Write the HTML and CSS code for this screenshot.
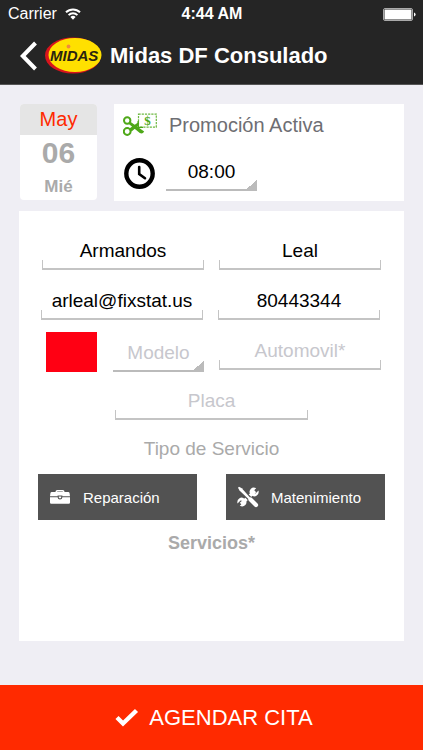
FILE: index.html
```html
<!DOCTYPE html>
<html lang="es">
<head>
  <meta charset="UTF-8">
  <meta name="viewport" content="width=device-width, initial-scale=1.0">
  <title>Agendar Cita</title>
  <link rel="stylesheet" href="styles.css">
</head>
<body>
  <header class="header">
    <div class="status-bar">
      <div class="carrier">
        <span>Carrier</span>
        <svg width="16" height="12" viewBox="0 0 16 12" fill="none" stroke="#fff" stroke-width="2">
          <path d="M1 4.3a10 10 0 0 1 14 0"/>
          <path d="M3.6 7.1a6.3 6.3 0 0 1 8.8 0"/>
          <path d="M5.4 9 8 11.8 10.6 9a3.8 3.8 0 0 0-5.2 0z" fill="#fff" stroke="none"/>
        </svg>
      </div>
      <span class="clock">4:44 AM</span>
      <div class="battery">
        <svg width="33" height="13" viewBox="0 0 33 13">
          <rect x=".5" y=".5" width="29" height="12" rx="1.5" fill="none" stroke="#aaa"/>
          <rect x="1.5" y="1.5" width="27" height="10" rx=".5" fill="#fff"/>
          <path d="M31 4.5q1.6.5 1.6 2t-1.6 2z" fill="#fff"/>
        </svg>
      </div>
    </div>
    <nav class="nav">
      <button class="back-btn" aria-label="Atrás">
        <svg width="18" height="30" viewBox="0 0 18 30" fill="none" stroke="#fff" stroke-width="4">
          <path d="M15.5 2 2.8 15l12.7 13"/>
        </svg>
      </button>
      <svg class="logo" width="58" height="37" viewBox="0 0 58 37">
        <ellipse cx="28" cy="18.5" rx="28" ry="18" fill="#d8141c"/>
        <ellipse cx="30" cy="18" rx="26.5" ry="17" fill="#ffe000"/>
        <text x="5" y="24" class="logo-text">MIDAS</text>
        <circle cx="23.5" cy="9.5" r="1.9" fill="#f08a3c"/>
      </svg>
      <h1>Midas DF Consulado</h1>
    </nav>
  </header>

  <main class="content">
    <section class="top-row">
      <div class="calendar">
        <p class="month">May</p>
        <p class="day">06</p>
        <p class="weekday">Mié</p>
      </div>
      <div class="info">
        <div class="info-row">
          <svg width="35" height="25" viewBox="0 0 35 25">
            <g fill="none" stroke="#4ea818" stroke-width="2">
              <circle cx="4.2" cy="7.5" r="3.2"/>
              <circle cx="4.2" cy="18.5" r="3.4"/>
            </g>
            <path d="M7 8.6 21.2 18.6q-1.6 2.8-4.4 1.4L5.8 11zM6.400 15.600l10-7 2.600 1L8.600 18.600z" fill="#4ea818"/>
            <rect x="15.500" y="1.200" width="17.800" height="13" fill="#fff" stroke="#6cb840" stroke-width="1.200" stroke-dasharray="2.200 1"/>
            <path d="M15.200 8v6.400H20" fill="none" stroke="#4ea818" stroke-width="1.400"/>
            <text x="24.500" y="12" class="coupon-sign">$</text>
          </svg>
          <p class="promo">Promoción Activa</p>
        </div>
        <div class="info-row time-row">
          <svg width="33" height="33" viewBox="0 0 33 33" fill="none" stroke="#000">
            <circle cx="16.5" cy="15.5" r="13.2" stroke-width="4.4"/>
            <path d="M16.2 9v7l5.8 4.2" stroke-width="2.6" stroke-linecap="round"/>
          </svg>
          <select class="picker time" aria-label="Hora">
            <option>08:00</option>
          </select>
        </div>
      </div>
    </section>

    <form class="form" id="cita">
      <div class="row">
        <input class="field" type="text" aria-label="Nombre" value="Armandos">
        <input class="field" type="text" aria-label="Apellido" value="Leal">
      </div>
      <div class="row row-contact">
        <input class="field" type="email" aria-label="Correo" value="arleal@fixstat.us">
        <input class="field" type="tel" aria-label="Teléfono" value="80443344">
      </div>
      <div class="row row-car">
        <div class="car-model">
          <button class="swatch" type="button" aria-label="Color"></button>
          <select class="picker empty" aria-label="Modelo">
            <option>Modelo</option>
          </select>
        </div>
        <input class="field" type="text" aria-label="Automovil" placeholder="Automovil*">
      </div>
      <input class="field plate" type="text" aria-label="Placa" placeholder="Placa">

      <h2 class="service-type">Tipo de Servicio</h2>
      <div class="service-buttons">
        <button class="service-btn" type="button">
          <svg width="22" height="18" viewBox="0 0 22 18" fill="#fff">
            <path d="M6.5 4.5V3.8Q6.5 2 8.3 2h5.4q1.8 0 1.8 1.8v.7h-1.7v-.9H8.2v.9z"/>
            <path d="M2.8 4h16.4q1.2 0 1.4 1.2l.4 3.1h-7.6v-.7H8.6v.7H1l.4-3.1Q1.6 4 2.8 4z"/>
            <path d="M1 9.2h7.6q.2 2.2 2.4 2.2t2.4-2.2H21v5.3q0 1.3-1.3 1.3H2.3Q1 15.8 1 14.5z"/>
            <path d="M9.8 8.6h2.4v.8q0 .9-1.2.9t-1.2-.9z"/>
          </svg>
          <span>Reparación</span>
        </button>
        <button class="service-btn" type="button">
          <svg width="22" height="22" viewBox="0 0 22 22">
            <path d="M4 18 18 5" stroke="#fff" stroke-width="3.4"/>
            <path d="M19.2 2.2 16 5.2l.5 1.9 2 .4 3-3.1q.8 3.4-1.7 5.2-2 1.4-4.2.5l-2.9-3q-.7-2.2 1-4.1 2.2-2.3 5.5-.8z" fill="#fff"/>
            <path d="M2.8 19.8 6 16.8l-.5-1.9-2-.4-3 3.1q-.8-3.4 1.7-5.2 2-1.4 4.2-.5l2.9 3q.7 2.2-1 4.1-2.2 2.300-5.500.8z" fill="#fff"/>
            <path d="M4 4 18 18" stroke="#525252" stroke-width="4.6"/>
            <path d="M1 1.7 2 .8l2.800 1.500 8.400 9.400-1.500 1.500L2.500 4.500z" fill="#fff"/>
            <path d="m13.500 13.500 5.500 5.500" stroke="#fff" stroke-width="4.200" stroke-linecap="round"/>
          </svg>
          <span>Matenimiento</span>
        </button>
      </div>
      <h2 class="services">Servicios*</h2>
    </form>
  </main>

  <button class="submit-btn" type="submit" form="cita">
    <svg width="24" height="20" viewBox="0 0 24 20" fill="none" stroke="#fff" stroke-width="4.4">
      <path d="m2 9.500 6 6L21.500 2.500"/>
    </svg>
    <span>AGENDAR CITA</span>
  </button>
</body>
</html>
```
FILE: styles.css
```css
* {
  box-sizing: border-box;
}

body {
  font-family: "Liberation Sans", Arial, sans-serif;
  background-color: #efeef4;
  color: #000;
  display: flex;
  flex-direction: column;
  min-height: 100vh;
  margin: 0;
}

h1, h2, p {
  margin: 0;
}

button, input, select {
  font-family: inherit;
  border: none;
  border-radius: 0;
  margin: 0;
  padding: 0;
}

button {
  cursor: pointer;
}

/* header */
.header {
  background-color: #252525;
  color: #fff;
  padding-bottom: 1px;
  border-bottom: 1px solid #555;
}

.status-bar {
  display: grid;
  grid-template-columns: 1fr auto 1fr;
  align-items: center;
  height: 28px;
  padding: 0 7px 0 8px;
  font-size: 16px;
}

.carrier {
  display: flex;
  align-items: center;
  gap: 8px;
}

.clock {
  font-weight: bold;
}

.battery {
  display: flex;
  justify-content: flex-end;
}

.nav {
  display: flex;
  align-items: center;
  height: 55px;
  padding-left: 20px;
}

.back-btn {
  display: flex;
  background: none;
}

.logo {
  margin: 0 7px;
}

.logo-text {
  font-size: 15px;
  font-weight: bold;
  font-style: italic;
  fill: #2a2410;
}

.nav h1 {
  font-size: 22px;
  line-height: 28px;
}

/* date and time */
.content {
  flex: 1;
  display: flex;
  flex-direction: column;
  gap: 10px;
  padding: 19px 19px 44px;
}

.top-row {
  display: flex;
  gap: 17px;
  padding-left: 1px;
}

.calendar {
  width: 77px;
  height: 96px;
  border-radius: 4px;
  overflow: hidden;
  background-color: #fff;
  color: #aaa;
  text-align: center;
}

.month {
  background-color: #e5e5e5;
  color: #ff2a00;
  font-size: 20px;
  line-height: 31px;
}

.day {
  font-size: 30px;
  font-weight: bold;
  line-height: 36px;
}

.weekday {
  font-size: 17px;
  font-weight: bold;
  line-height: 31px;
}

.info {
  flex: 1;
  background-color: #fff;
  padding: 7px 9px 10px;
}

.info-row {
  display: flex;
  align-items: center;
}

.time-row {
  align-items: flex-end;
  margin-top: 12px;
}

.coupon-sign {
  font-family: "Liberation Serif", serif;
  font-size: 13px;
  font-weight: bold;
  fill: #4ea818;
  text-anchor: middle;
}

.promo {
  margin-left: 11px;
  color: #6e6e73;
  font-size: 20px;
  line-height: 28px;
}

.time {
  width: 91px;
  margin-left: 10px;
}

/* form */
.form {
  flex: 1;
  background-color: #fff;
  padding-top: 21px;
}

.row {
  display: grid;
  grid-template-columns: 1fr 1fr;
  gap: 15px;
  padding: 0 23px;
  margin-bottom: 12px;
}

.row-contact {
  padding: 0 24px 0 22px;
}

.row-car {
  margin-bottom: 10px;
}

.car-model {
  display: flex;
  gap: 16px;
  padding-left: 4px;
}

.swatch {
  width: 51px;
  height: 40px;
  background-color: #ff0013;
}

/* underline with a short tick at each end */
.field {
  width: 100%;
  height: 38px;
  padding: 0 4px;
  background:
    linear-gradient(#c4c4c4, #c4c4c4) left bottom / 100% 2px no-repeat,
    linear-gradient(#c4c4c4, #c4c4c4) left bottom / 1px 10px no-repeat,
    linear-gradient(#c4c4c4, #c4c4c4) right bottom / 1px 10px no-repeat;
  font-size: 19px;
  text-align: center;
}

.field::placeholder {
  color: #c7c7cd;
}

.field:focus,
.picker:focus {
  outline: none;
}

/* underline with a corner triangle */
.picker {
  appearance: none;
  height: 40px;
  background:
    linear-gradient(#bbb, #bbb) left bottom / 100% 2px no-repeat,
    linear-gradient(to bottom right, transparent 50%, #bbb 50%) right bottom / 13px 11px no-repeat;
  color: #000;
  font-size: 19px;
  text-align: center;
  text-align-last: center;
}

.car-model .picker {
  flex: 1;
  min-width: 0;
}

.picker.empty {
  color: #c7c7cd;
}

.plate {
  display: block;
  width: 50%;
  margin: 0 auto;
}

.service-type {
  margin: 16px 0 12px;
  color: #aaa;
  font-size: 19px;
  font-weight: normal;
  line-height: 26px;
  text-align: center;
}

.service-buttons {
  display: flex;
  gap: 29px;
  padding: 0 19px;
}

.service-btn {
  flex: 1;
  display: flex;
  align-items: center;
  gap: 12px;
  height: 46px;
  padding-left: 11px;
  background-color: #525252;
  color: #fff;
  font-size: 15px;
}

.services {
  margin-top: 10px;
  color: #aaa;
  font-size: 18px;
  line-height: 26px;
  text-align: center;
}

.submit-btn {
  display: flex;
  align-items: center;
  justify-content: center;
  gap: 10px;
  height: 65px;
  padding-left: 5px;
  background-color: #ff2a00;
  color: #fff;
  font-size: 22px;
}
```
